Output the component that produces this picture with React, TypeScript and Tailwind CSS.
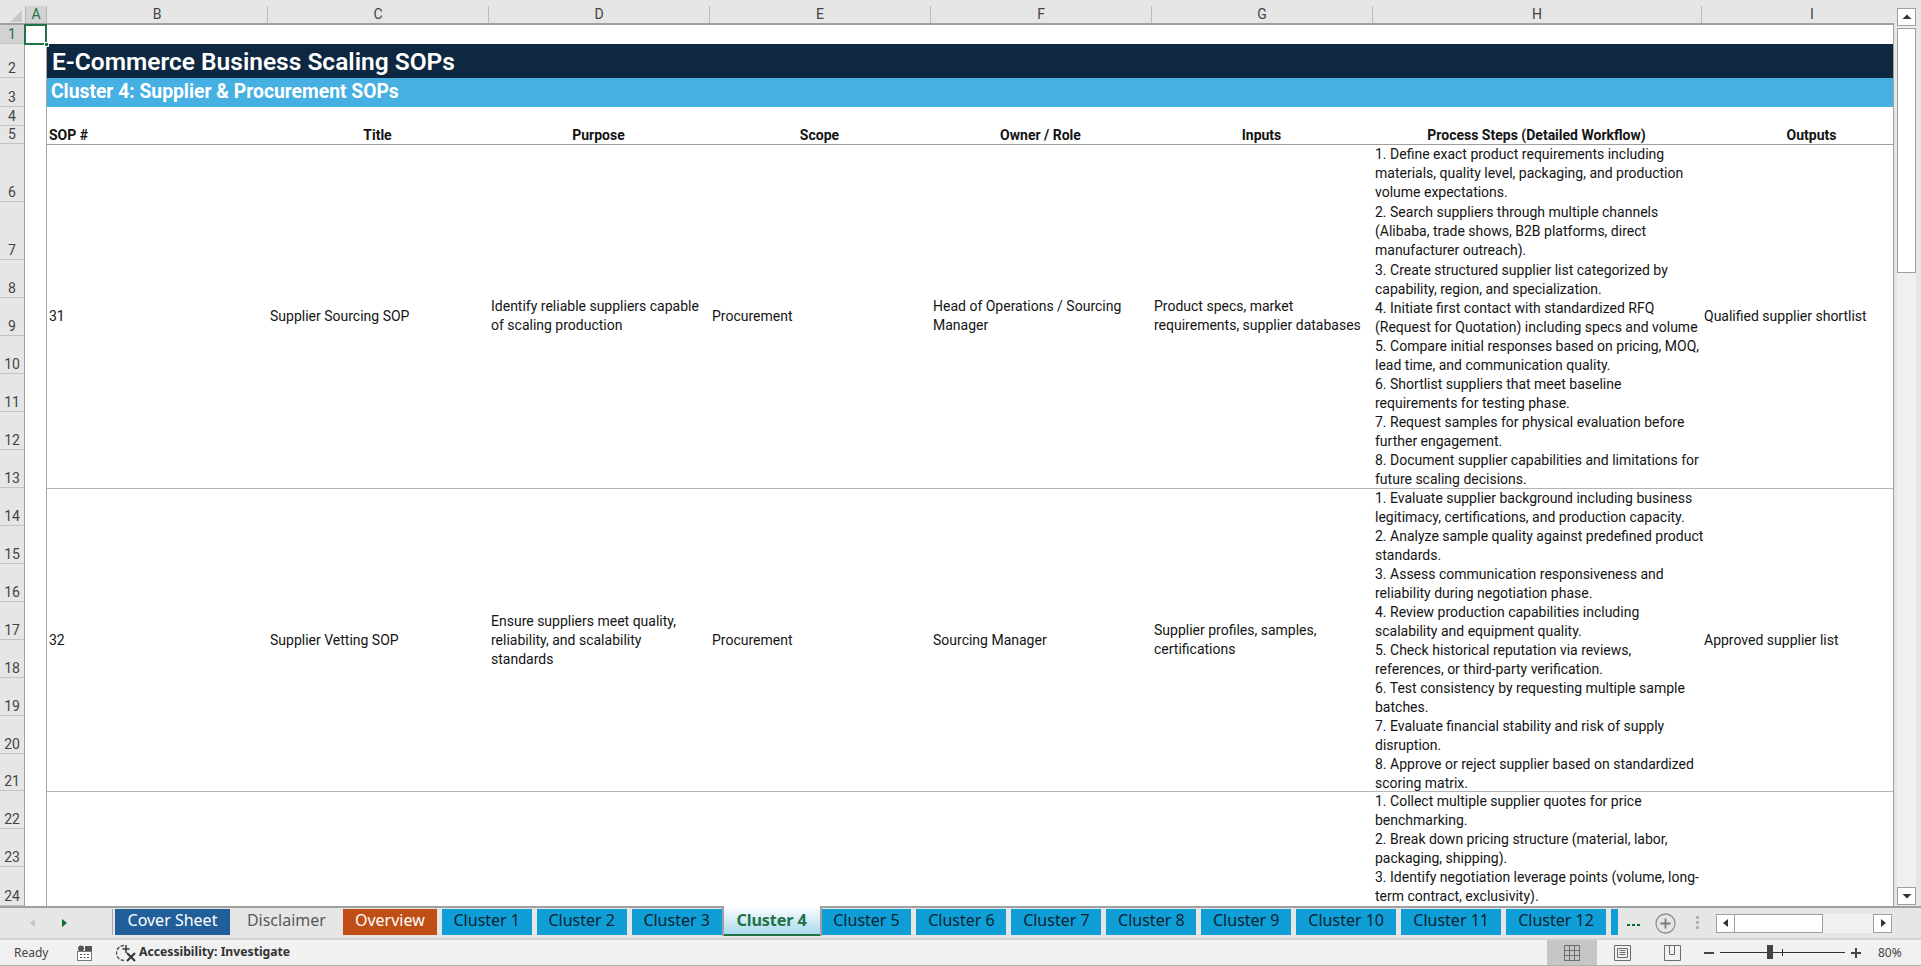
import React from "react";

const cols: [string, string][] = [
  ["B", "w-[221px]"],
  ["C", "w-[221px]"],
  ["D", "w-[221px]"],
  ["E", "w-[221px]"],
  ["F", "w-[221px]"],
  ["G", "w-[221px]"],
  ["H", "w-[329px]"],
  ["I", "w-[221px]"],
];

const gridCols = "grid grid-cols-[221px_221px_221px_221px_221px_221px_329px_221px]";

const rowHeaders: [string, string][] = [
  ["1", "h-[19px]"],
  ["2", "h-[34px]"],
  ["3", "h-[29px]"],
  ["4", "h-[19px]"],
  ["5", "h-[18px]"],
  ["6", "h-[58px]"],
  ["7", "h-[58px]"],
  ["8", "h-[38px]"],
  ["9", "h-[38px]"],
  ["10", "h-[38px]"],
  ["11", "h-[38px]"],
  ["12", "h-[38px]"],
  ["13", "h-[38px]"],
  ["14", "h-[38px]"],
  ["15", "h-[38px]"],
  ["16", "h-[38px]"],
  ["17", "h-[38px]"],
  ["18", "h-[38px]"],
  ["19", "h-[38px]"],
  ["20", "h-[38px]"],
  ["21", "h-[37px]"],
  ["22", "h-[38px]"],
  ["23", "h-[38px]"],
  ["24", "h-[39px]"],
];

const headers = ["Title", "Purpose", "Scope", "Owner / Role", "Inputs", "Process Steps (Detailed Workflow)", "Outputs"];

type Row = {
  num: string;
  height: string;
  title: string;
  purpose: string[];
  scope: string;
  owner: string[];
  inputs: string[];
  steps: string[][];
  output: string;
};

const sops: Row[] = [
  {
    num: "31",
    height: "h-[344px]",
    title: "Supplier Sourcing SOP",
    purpose: ["Identify reliable suppliers capable", "of scaling production"],
    scope: "Procurement",
    owner: ["Head of Operations / Sourcing", "Manager"],
    inputs: ["Product specs, market", "requirements, supplier databases"],
    steps: [
      ["1. Define exact product requirements including", "materials, quality level, packaging, and production", "volume expectations."],
      ["2. Search suppliers through multiple channels", "(Alibaba, trade shows, B2B platforms, direct", "manufacturer outreach)."],
      ["3. Create structured supplier list categorized by", "capability, region, and specialization."],
      ["4. Initiate first contact with standardized RFQ", "(Request for Quotation) including specs and volume"],
      ["5. Compare initial responses based on pricing, MOQ,", "lead time, and communication quality."],
      ["6. Shortlist suppliers that meet baseline", "requirements for testing phase."],
      ["7. Request samples for physical evaluation before", "further engagement."],
      ["8. Document supplier capabilities and limitations for", "future scaling decisions."],
    ],
    output: "Qualified supplier shortlist",
  },
  {
    num: "32",
    height: "h-[303px]",
    title: "Supplier Vetting SOP",
    purpose: ["Ensure suppliers meet quality,", "reliability, and scalability", "standards"],
    scope: "Procurement",
    owner: ["Sourcing Manager"],
    inputs: ["Supplier profiles, samples,", "certifications"],
    steps: [
      ["1. Evaluate supplier background including business", "legitimacy, certifications, and production capacity."],
      ["2. Analyze sample quality against predefined product", "standards."],
      ["3. Assess communication responsiveness and", "reliability during negotiation phase."],
      ["4. Review production capabilities including", "scalability and equipment quality."],
      ["5. Check historical reputation via reviews,", "references, or third-party verification."],
      ["6. Test consistency by requesting multiple sample", "batches."],
      ["7. Evaluate financial stability and risk of supply", "disruption."],
      ["8. Approve or reject supplier based on standardized", "scoring matrix."],
    ],
    output: "Approved supplier list",
  },
];

const row33 = [
  "1. Collect multiple supplier quotes for price",
  "benchmarking.",
  "2. Break down pricing structure (material, labor,",
  "packaging, shipping).",
  "3. Identify negotiation leverage points (volume, long-",
  "term contract, exclusivity).",
];

const Lines = ({ lines }: { lines: string[] }) => (
  <div className="flex flex-col">
    {lines.map((l) => (
      <div key={l} className="h-[19px] leading-[19px] whitespace-nowrap">
        {l}
      </div>
    ))}
  </div>
);

const Cell = ({ lines }: { lines: string[] }) => (
  <div className="flex items-center pl-[2px] pb-[2px] min-w-0">
    <Lines lines={lines} />
  </div>
);

const Triangle = ({ d, className }: { d: string; className: string }) => (
  <svg width="12" height="12" viewBox="0 0 12 12" className={className}>
    <path d={d} fill="currentColor" />
  </svg>
);

const Sep = () => (
  <div className="w-[5px] flex justify-center">
    <div className="w-px h-full bg-[#a8a8a8]" />
  </div>
);

const Tab = ({ label, className }: { label: string; className: string }) => (
  <div className={`flex items-center justify-center h-[26px] pb-[4px] text-[16px] whitespace-nowrap font-['Noto_Sans',sans-serif] ${className}`}>
    {label}
  </div>
);

const blue = "bg-[#0f9ed5] text-[#0c2433]";

export default function App() {
  return (
    <div className="w-[1921px] h-[966px] overflow-hidden flex flex-col bg-[#e6e6e6] font-['Roboto',sans-serif] text-[14px] text-[#141414] relative">
      {/* sheet region */}
      <div className="flex h-[906px]">
        <div className="w-[1894px] flex flex-col overflow-hidden">
          {/* column headers */}
          <div className="flex h-[25px] shrink-0 border-b-2 border-[#a0a0a0]">
            <div className="w-[25px] shrink-0 relative">
              <svg width="12" height="12" viewBox="0 0 12 12" className="absolute left-[10px] top-[10px]">
                <path d="M12 0V12H0Z" fill="#c8c8c8" />
              </svg>
            </div>
            <div className="w-[22px] shrink-0 mt-[6px] bg-[#d2d2d2] border-x border-[#b5b5b5] flex items-center justify-center text-[#217346] text-[14px]">A</div>
            {cols.map(([c, w]) => (
              <div key={c} className={`${w} shrink-0 mt-[6px] border-r border-[#bcbcbc] flex items-center justify-center text-[#444] text-[14px]`}>
                {c}
              </div>
            ))}
          </div>
          {/* body */}
          <div className="flex flex-1 min-h-0 overflow-hidden">
            <div className="w-[25px] shrink-0 flex flex-col border-r border-[#a0a0a0]">
              {rowHeaders.map(([n, h], i) => (
                <div
                  key={n}
                  className={`${h} shrink-0 flex items-end justify-center border-b border-[#c4c4c4] leading-[17px] text-[14px] ${i === 0 ? "bg-[#d2d2d2] text-[#217346]" : "text-[#444]"}`}
                >
                  {n}
                </div>
              ))}
            </div>
            <div className="w-[22px] shrink-0 bg-white flex flex-col">
              <div className="h-[19px]" />
              <div className="flex-1 border-r border-[#a8a8a8]" />
            </div>
            <div className="w-[1847px] shrink-0 bg-white flex flex-col border-r border-[#a0a0a0] overflow-hidden">
              <div className="h-[19px] shrink-0" />
              <div className="h-[34px] shrink-0 bg-[#0e2841] text-white pl-[5px] pt-[3px] flex items-center text-[24.5px] font-semibold leading-none whitespace-nowrap">
                E-Commerce Business Scaling SOPs
              </div>
              <div className="h-[29px] shrink-0 bg-[#45b0e1] text-white pl-[4px] pb-[1px] flex items-center text-[19.3px] font-bold whitespace-nowrap">
                Cluster 4: Supplier &amp; Procurement SOPs
              </div>
              <div className="h-[19px] shrink-0" />
              <div className={`${gridCols} h-[19px] shrink-0 font-bold border-b border-[#a0a0a0] leading-[19px]`}>
                <div className="pl-[2px]">SOP #</div>
                {headers.map((h) => (
                  <div key={h} className="text-center pr-[2px]">
                    {h}
                  </div>
                ))}
              </div>
              {sops.map((s) => (
                <div key={s.num} className={`${gridCols} ${s.height} shrink-0 border-b border-[#b4b4b4]`}>
                  <div className="flex items-center pl-[2px] pb-[2px]">{s.num}</div>
                  <Cell lines={[s.title]} />
                  <Cell lines={s.purpose} />
                  <Cell lines={[s.scope]} />
                  <Cell lines={s.owner} />
                  <Cell lines={s.inputs} />
                  <div className="pl-[2px] flex flex-col">
                    {s.steps.map((st, i) => (
                      <div key={st[0]} className={s.num === "31" && (i === 1 || i === 2) ? "mt-px" : ""}>
                        <Lines lines={st} />
                      </div>
                    ))}
                  </div>
                  <Cell lines={[s.output]} />
                </div>
              ))}
              <div className={`${gridCols} shrink-0`}>
                <div className="col-start-7 pl-[2px]">
                  <Lines lines={row33} />
                </div>
              </div>
            </div>
          </div>
        </div>
        {/* vertical scrollbar */}
        <div className="w-[27px] flex flex-col items-start pl-[3px] pt-[8px] pb-[1px]">
          <div className="w-[19px] flex-1 bg-[#f0f0f0] flex flex-col">
            <div className="h-[18px] bg-white border border-[#a0a0a0] flex items-center justify-center text-[#333]">
              <Triangle d="M6 3.5L10.5 8H1.5Z" className="" />
            </div>
            <div className="h-[245px] mt-[2px] bg-white border border-[#a0a0a0]" />
            <div className="flex-1" />
            <div className="h-[18px] bg-white border border-[#a0a0a0] flex items-center justify-center text-[#333]">
              <Triangle d="M1.5 4H10.5L6 8.5Z" className="" />
            </div>
          </div>
        </div>
      </div>

      {/* tab bar */}
      <div className="h-[32px] shrink-0 flex border-t-2 border-[#a0a0a0]">
        <div className="w-[112px] flex items-center relative">
          <Triangle d="M8 2V10L3 6Z" className="ml-[27px] text-[#c4c4c4]" />
          <Triangle d="M4 2L9 6L4 10Z" className="ml-[19px] text-[#0e6b2f]" />
        </div>
        <div className="w-[3px] mt-[1px] h-[26px] flex justify-start">
          <div className="w-px h-full bg-[#a8a8a8]" />
        </div>
        <div className="w-[1503px] flex items-start pt-px overflow-visible">
          <Tab label="Cover Sheet" className="w-[115px] bg-[#215f9a] text-white" />
          <Sep />
          <Tab label="Disclaimer" className="w-[103px] text-[#595959]" />
          <Sep />
          <Tab label="Overview" className="w-[94px] bg-[#c04f15] text-white" />
          <Sep />
          <Tab label="Cluster 1" className={`w-[90px] ${blue}`} />
          <Sep />
          <Tab label="Cluster 2" className={`w-[90px] ${blue}`} />
          <Sep />
          <Tab label="Cluster 3" className={`w-[90px] ${blue}`} />
          <div className="w-[100px] h-[30px] -mt-[3px] border-x-2 border-[#a0a0a0] flex flex-col">
            <div className="h-[28px] flex items-center justify-center bg-gradient-to-b from-white to-[#a9d9ee] text-[#217346] font-bold text-[16.2px] tracking-[-0.1px] font-['Noto_Sans',sans-serif]">
              Cluster 4
            </div>
            <div className="h-[2px] bg-[#217346]" />
          </div>
          <Tab label="Cluster 5" className={`w-[90px] ${blue}`} />
          <Sep />
          <Tab label="Cluster 6" className={`w-[90px] ${blue}`} />
          <Sep />
          <Tab label="Cluster 7" className={`w-[90px] ${blue}`} />
          <Sep />
          <Tab label="Cluster 8" className={`w-[90px] ${blue}`} />
          <Sep />
          <Tab label="Cluster 9" className={`w-[90px] ${blue}`} />
          <Sep />
          <Tab label="Cluster 10" className={`w-[100px] ${blue}`} />
          <Sep />
          <Tab label="Cluster 11" className={`w-[100px] ${blue}`} />
          <Sep />
          <Tab label="Cluster 12" className={`w-[100px] ${blue}`} />
          <Sep />
          <div className={`w-[7px] h-[26px] ${blue}`} />
        </div>
        <div className="flex items-center h-[30px]">
          <svg width="14" height="4" viewBox="0 0 14 4" className="ml-[9px] mt-[4px]">
            <rect x="0" y="1" width="3" height="2" fill="#0e6b2f" />
            <rect x="5" y="1" width="3" height="2" fill="#0e6b2f" />
            <rect x="10" y="1" width="3" height="2" fill="#0e6b2f" />
          </svg>
          <svg width="21" height="21" viewBox="0 0 21 21" className="ml-[14px]">
            <circle cx="10.5" cy="10.5" r="9.5" fill="none" stroke="#8f8f8f" strokeWidth="1.3" />
            <path d="M10.5 5.5V15.5M5.5 10.5H15.5" stroke="#7a7a7a" strokeWidth="1.8" />
          </svg>
          <svg width="4" height="14" viewBox="0 0 4 14" className="ml-[20px]">
            <rect x="0" y="0" width="3" height="3" fill="#b3b3b3" />
            <rect x="0" y="5" width="3" height="3" fill="#b3b3b3" />
            <rect x="0" y="10" width="3" height="3" fill="#b3b3b3" />
          </svg>
          <div className="ml-[16px] w-[176px] h-[19px] bg-[#f0f0f0] flex items-stretch">
            <div className="w-[19px] bg-white border border-[#a0a0a0] flex items-center justify-center text-[#333]">
              <Triangle d="M8 2V10L3 6Z" className="" />
            </div>
            <div className="w-[88px] bg-white border border-l-0 border-[#a0a0a0]" />
            <div className="flex-1" />
            <div className="w-[19px] bg-white border border-[#a0a0a0] flex items-center justify-center text-[#333]">
              <Triangle d="M4 2L9 6L4 10Z" className="" />
            </div>
          </div>
        </div>
      </div>

      {/* status bar */}
      <div className="h-[28px] shrink-0 flex items-stretch bg-[#f1f1f1] border-t-2 border-[#d2d2d2] border-b border-b-[#b0b0b0] font-['Noto_Sans',sans-serif] text-[12px] text-[#444]">
        <div className="w-[77px] pl-[14px] flex items-center">Ready</div>
        <svg width="15" height="16" viewBox="0 0 15 16" className="self-center">
          <circle cx="4" cy="3.5" r="3" fill="#555" />
          <rect x="8" y="1" width="7" height="5" fill="#555" />
          <rect x="0.5" y="6.5" width="14" height="9" fill="#fff" stroke="#777" />
          <path d="M3 9.5h2M6.5 9.5h2M10 9.5h2M3 12.5h2M6.5 12.5h2M10 12.5h2" stroke="#555" strokeWidth="1.2" />
        </svg>
        <svg width="20" height="18" viewBox="0 0 20 18" className="self-center ml-[24px] shrink-0">
          <path d="M8 1.5A7.5 7.5 0 0 0 8 16.5" fill="none" stroke="#555" strokeWidth="1.4" strokeDasharray="3.5 1.5" />
          <path d="M10 1v8M6.5 5h7" stroke="#333" strokeWidth="1.4" />
          <path d="M11 9l8 8M19 9l-8 8" stroke="#333" strokeWidth="2" />
        </svg>
        <div className="ml-[3px] flex items-center font-bold text-[12.2px] text-[#333] whitespace-nowrap">Accessibility: Investigate</div>
        <div className="flex-1" />
        <div className="w-[50px] bg-[#c6c6c6] flex items-center justify-center">
          <svg width="16" height="16" viewBox="0 0 16 16">
            <path d="M0.5 0.5H15.5V15.5H0.5ZM5.5 0.5V15.5M10.5 0.5V15.5M0.5 5.5H15.5M0.5 10.5H15.5" fill="none" stroke="#6e6e6e" />
          </svg>
        </div>
        <div className="w-[50px] flex items-center justify-center">
          <svg width="17" height="16" viewBox="0 0 17 16">
            <path d="M0.5 0.5H16.5V15.5H0.5ZM3.5 3.5H13.5V12.5H3.5Z" fill="none" stroke="#6e6e6e" />
            <path d="M5.5 5.5H11.5M5.5 7.5H11.5M5.5 9.5H11.5" stroke="#6e6e6e" />
          </svg>
        </div>
        <div className="w-[50px] flex items-center justify-center">
          <svg width="17" height="16" viewBox="0 0 17 16">
            <path d="M0.5 0.5H16.5V15.5H0.5ZM5.5 0.5V9.5H10.5V0.5" fill="none" stroke="#6e6e6e" />
          </svg>
        </div>
        <div className="flex items-center ml-[7px] relative">
          <div className="w-[10px] h-[2px] bg-[#444]" />
          <div className="w-[125px] h-px bg-[#333] ml-[6px] relative">
            <div className="absolute left-[47px] -top-[7px] w-[6px] h-[14px] bg-[#444]" />
            <div className="absolute left-[62px] -top-[3px] w-px h-[7px] bg-[#333]" />
          </div>
          <div className="ml-[6px] w-[10px] h-[10px] relative">
            <div className="absolute left-0 top-[4px] w-[10px] h-[2px] bg-[#444]" />
            <div className="absolute left-[4px] top-0 w-[2px] h-[10px] bg-[#444]" />
          </div>
          <div className="ml-[17px] w-[43px] text-[#444]">80%</div>
        </div>
      </div>

      {/* active cell */}
      <div className="absolute left-[24px] top-[24px] w-[23px] h-[21px] border-2 border-[#217346]" />
      <div className="absolute left-[44px] top-[42px] w-[5px] h-[5px] bg-[#217346] border border-white" />
    </div>
  );
}
